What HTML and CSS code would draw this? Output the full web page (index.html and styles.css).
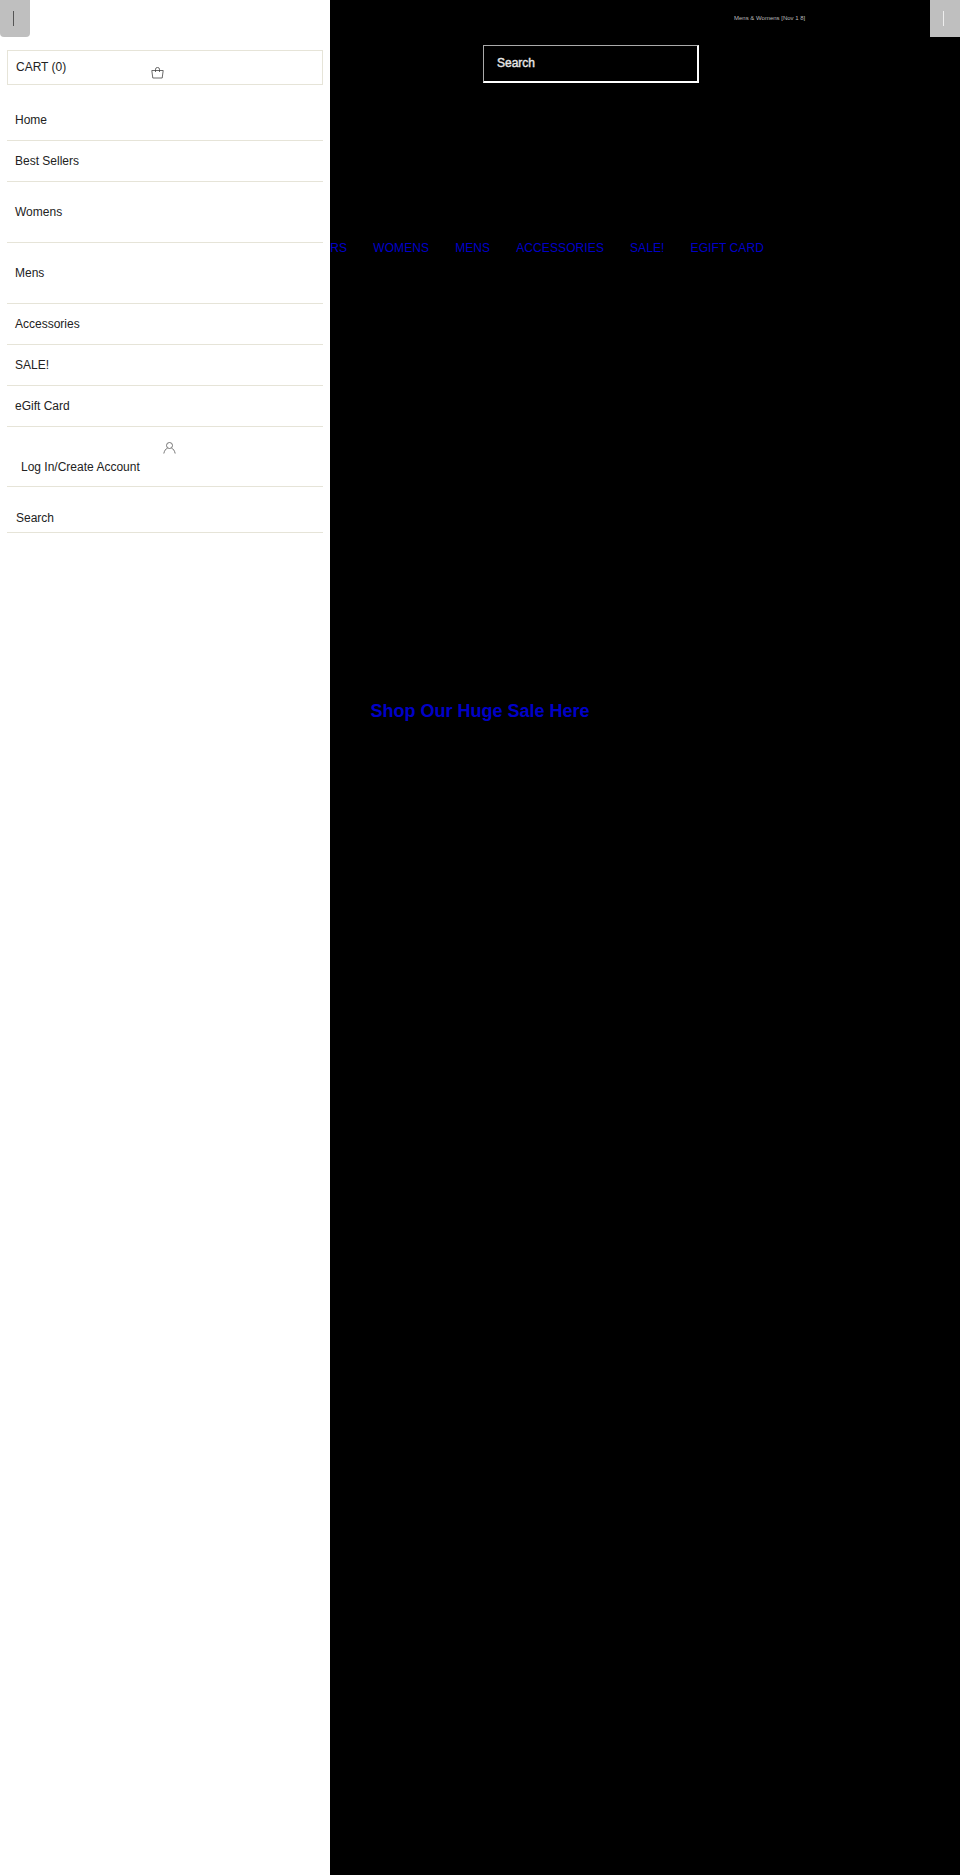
FILE: index.html
```html
<!DOCTYPE html>
<html lang="en">
<head>
<meta charset="utf-8">
<title>Shop</title>
<link rel="stylesheet" href="styles.css">
</head>
<body>
<main class="page">
  <p class="announce">Mens &amp; Womens [Nov 1 8]</p>
  <div class="search-wrap"><div class="search-box">Search</div></div>
  <nav class="nav">
    <a href="#">BEST SELLERS</a>
    <a href="#">WOMENS</a>
    <a href="#">MENS</a>
    <a href="#">ACCESSORIES</a>
    <a href="#">SALE!</a>
    <a href="#">EGIFT CARD</a>
  </nav>
  <h2 class="hero"><a href="#">Shop Our Huge Sale Here</a></h2>
</main>
<button class="toggle toggle-right" aria-label="Menu"><span class="bar"></span></button>
<aside class="drawer">
  <button class="toggle toggle-left" aria-label="Close"><span class="bar"></span></button>
  <div class="cart">
    <span>CART (0)</span>
    <svg class="cart-icon" viewBox="0 0 13 12" width="13" height="12" aria-hidden="true"><path d="M.8 3.500h11.400l-1 7.500H1.800zM4.500 5V2.200a2 1.700 0 0 1 4 0V5" fill="none" stroke="#444" stroke-width="0.8"/></svg>
  </div>
  <ul class="menu">
    <li class="item first">Home</li>
    <li class="item">Best Sellers</li>
    <li class="item tall">Womens</li>
    <li class="item tall">Mens</li>
    <li class="item">Accessories</li>
    <li class="item">SALE!</li>
    <li class="item">eGift Card</li>
    <li class="item login">
      <svg class="user-icon" viewBox="0 0 13 12" width="13" height="12" aria-hidden="true"><circle cx="6.500" cy="3.500" r="3" fill="none" stroke="#666" stroke-width="0.9"/><path d="M.8 11.500c.6-2.800 2-4.800 3.700-5.300M12.200 11.500c-.6-2.800-2-4.800-3.700-5.300" fill="none" stroke="#666" stroke-width="0.9"/></svg>
      <span>Log In/Create Account</span>
    </li>
    <li class="item search-item">Search</li>
  </ul>
</aside>
</body>
</html>
```
FILE: styles.css
```css
* { box-sizing: border-box; }
html, body { margin: 0; padding: 0; }
body {
  width: 960px;
  height: 1875px;
  background: #000;
  font-family: "Liberation Sans", Arial, sans-serif;
  position: relative;
  overflow: hidden;
}
.page { display: flex; flex-direction: column; height: 100%; }
.announce {
  margin: 14px 0 0 734px;
  height: 9px;
  font-size: 6px;
  line-height: 9px;
  color: #bbb;
  white-space: nowrap;
}
.search-wrap { margin: 22px 0 0 483px; }
.search-box {
  width: 216px;
  height: 38px;
  border-style: solid;
  border-width: 1px 2px 2px 1px;
  border-color: #aaa #fff #fff #aaa;
  padding: 0 13px;
  color: #e8e8e8;
  font-size: 12px;
  line-height: 34px;
  -webkit-text-stroke: 0.4px #e8e8e8;
}
.nav {
  margin-top: 158px;
  padding-right: 196px;
  display: flex;
  justify-content: flex-end;
  gap: 26px;
  font-size: 12px;
  line-height: 15px;
  letter-spacing: 0.1px;
}
.nav a { color: #0000c8; text-decoration: none; white-space: nowrap; }
.hero {
  margin: 443px 0 0;
  text-align: center;
  font-size: 18px;
  line-height: 24px;
  font-weight: bold;
}
.hero a { color: #0000c8; text-decoration: none; }
.drawer {
  position: absolute;
  left: 0;
  top: 0;
  width: 330px;
  height: 1875px;
  background: #fff;
  padding: 50px 7px 0 7px;
  color: #222;
  font-size: 12px;
}
.toggle {
  position: absolute;
  top: 0;
  width: 30px;
  height: 37px;
  padding: 0 0 0 13px;
  border: 0;
  background: #bfbfbf;
  display: flex;
  align-items: center;
  justify-content: flex-start;
}
.toggle-left { left: 0; border-radius: 0 0 4px 4px; }
.toggle-right { right: 0; }
.bar { display: block; width: 1px; height: 15px; background: #555; }
.toggle-right .bar { background: #eee; }
.cart {
  position: relative;
  width: 316px;
  height: 35px;
  border: 1px solid #e6e4d8;
  padding: 8px 8px;
  line-height: 16px;
}
.cart-icon { position: absolute; left: 143px; top: 16px; }
.menu { list-style: none; margin: 0; padding: 0; width: 316px; }
.item {
  height: 41px;
  border-bottom: 1px solid #e6e4d8;
  padding: 12px 8px 0;
  line-height: 16px;
  position: relative;
}
.item.first { margin-top: 15px; }
.item.tall { height: 61px; padding-top: 22px; }
.item.login { height: 60px; padding: 32px 14px 0; }
.user-icon { position: absolute; left: 156px; top: 15px; }
.search-item { height: 46px; padding: 23px 9px 0; }
```
